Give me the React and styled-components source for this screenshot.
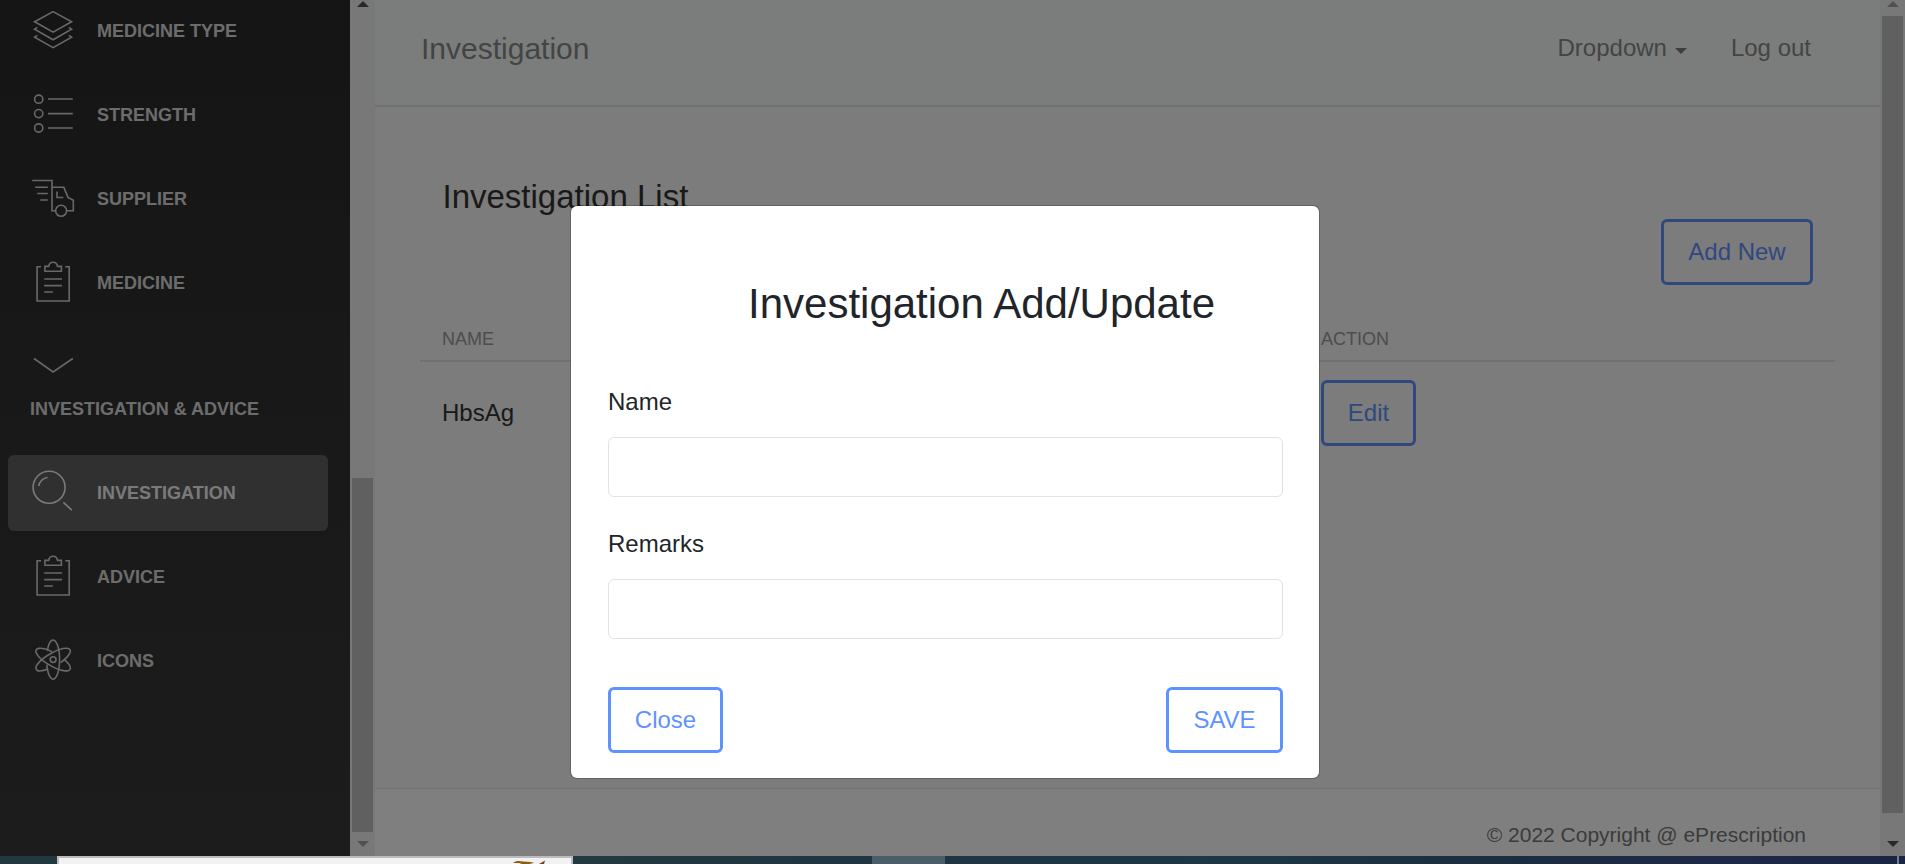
import React from "react";
import styled, { createGlobalStyle, css } from "styled-components";

const GlobalStyle = createGlobalStyle`
  * { box-sizing: border-box; }
  html, body { margin: 0; padding: 0; overflow: hidden; }
  body { font-family: "Liberation Sans", Arial, sans-serif; font-size: 24px; color: #212529; }
`;

const Desktop = styled.div`
  display: flex;
  flex-direction: column;
  width: 1905px;
  height: 864px;
  overflow: hidden;
`;

const Viewport = styled.div`
  position: relative;
  display: grid;
  grid-template-columns: 350px 25px 1505px 25px;
  height: 856px;
`;

/* Sidebar */
const Sidebar = styled.nav`
  height: 856px;
  overflow: hidden;
  padding: 0 22px 0 8px;
  background: linear-gradient(#2a2a2a, #393939);
`;

const NavList = styled.ul`
  list-style: none;
  margin: -7px 0 0;
  padding: 0;
  display: flex;
  flex-direction: column;
  gap: 8px;
`;

const NavItem = styled.li`
  display: flex;
  align-items: center;
  height: 76px;
  padding-left: 21px;
  border-radius: 6px;
  color: ${(p) => (p.$active ? "#fff" : "#dcdcdc")};
  background: ${(p) => (p.$active ? "#606060" : "transparent")};
  ${(p) =>
    p.$group &&
    css`
      flex-direction: column;
      align-items: flex-start;
      height: 118px;
      padding-top: 24px;
    `}
`;

const NavLabel = styled.span`
  margin: ${(p) => (p.$group ? "17px 0 0 1px" : "0 0 0 20px")};
  font-size: 18px;
  line-height: 30px;
  font-weight: 700;
  white-space: nowrap;
  color: ${(p) => (p.$active ? "#f5f5f5" : "#d9d9d9")};
`;

const Glyph = styled.svg`
  flex: none;
  width: 48px;
  height: ${(p) => (p.$short ? 24 : 48)}px;
  fill: none;
  stroke: currentColor;
  stroke-width: 1.6;
  stroke-linejoin: miter;
  opacity: 0.94;
`;

/* Scroll bars */
const ScrollTrack = styled.div`
  display: flex;
  flex-direction: column;
  align-items: center;
  height: 856px;
  padding: 1px 1px 9px;
  background: #f1f1f1;
`;

const ScrollArrow = styled.svg`
  flex: none;
  width: 12px;
  height: 6px;
  fill: ${(p) => (p.$dark ? "#505050" : "#a3a3a3")};
`;

const ScrollThumb = styled.div`
  width: 21px;
  height: ${(p) => p.$height}px;
  margin-top: ${(p) => p.$offset}px;
  margin-bottom: auto;
  background: #c1c1c1;
`;

/* Main panel */
const Main = styled.main`
  display: flex;
  flex-direction: column;
  background: #f8f8f8;
`;

const Header = styled.header`
  display: flex;
  align-items: center;
  justify-content: space-between;
  height: 107px;
  padding: 0 69px 7px 46px;
  border-bottom: 2px solid #e0e2e1;
  background: #f7fbf8;
  color: #888;
`;

const PageName = styled.div`
  font-size: 30px;
`;

const HeaderLinks = styled.div`
  display: flex;
  align-items: center;
  gap: 44px;
  margin-top: -2px;
`;

const HeaderLink = styled.a`
  display: flex;
  align-items: center;
`;

const Caret = styled.span`
  margin: 6px 0 0 8px;
  border: 6px solid transparent;
  border-top-color: #7c7c7c;
  border-bottom: 0;
`;

const Content = styled.section`
  flex: 1;
  padding: 71px 45px 0;
`;

const ListTitle = styled.h4`
  margin: 0 0 0 22.5px;
  font-size: 33px;
  font-weight: 400;
  line-height: 38px;
  color: #333;
`;

const Actions = styled.div`
  display: flex;
  justify-content: flex-end;
  margin-top: 3px;
  padding-right: 22px;
`;

const OutlineButton = styled.button`
  width: ${(p) => p.$width}px;
  height: 66px;
  padding: 0 0 1px;
  border: 3px solid #5e92ff;
  border-radius: 6px;
  background: transparent;
  color: #5e92ff;
  font: 24px "Liberation Sans", Arial, sans-serif;
`;

const TableHead = styled.div`
  display: grid;
  grid-template-columns: 879px 1fr;
  height: 43px;
  margin-top: 34px;
  padding: 9px 0 0 22px;
  border-bottom: 2px solid #e2e2e2;
  font-size: 18px;
  line-height: 22px;
  color: #9a9a9a;
`;

const TableRow = styled.div`
  display: grid;
  grid-template-columns: 879px 1fr;
  align-items: center;
  height: 102px;
  padding-left: 22px;
  color: #333;
`;

const Footer = styled.footer`
  display: flex;
  justify-content: flex-end;
  height: 68px;
  padding: 34px 74px 0 0;
  border-top: 1px solid #e7e7e7;
  background: #fff;
  font-size: 21px;
  line-height: 24px;
  color: #777;
`;

/* Dialog */
const Backdrop = styled.div`
  position: absolute;
  inset: 0;
  display: flex;
  justify-content: center;
  align-items: flex-start;
  padding: 205px 15px 0 0;
  background: rgba(0, 0, 0, 0.5);
`;

const Dialog = styled.div`
  width: 750px;
  height: 574px;
  padding: 73px 36px 0 37px;
  border: 1px solid rgba(0, 0, 0, 0.2);
  border-radius: 7px;
  background: #fff;
  background-clip: padding-box;
`;

const DialogTitle = styled.h3`
  margin: 0 0 55px 140px;
  font-size: 42px;
  font-weight: 400;
  line-height: 50px;
`;

const Field = styled.label`
  display: flex;
  flex-direction: column;
  gap: 17px;
  margin-bottom: 29px;
  line-height: 36px;
`;

const Input = styled.input`
  height: 60px;
  width: 100%;
  padding: 8px 18px;
  border: 1px solid #e3e3e3;
  border-radius: 6px;
  background: #fff;
  font: inherit;
`;

const DialogFooter = styled.div`
  display: flex;
  justify-content: space-between;
  padding-top: 19px;
`;

/* Desktop strip below the window */
const Taskbar = styled.div`
  display: flex;
  height: 8px;
  padding-left: 57px;
  background: linear-gradient(90deg, #22383f 0, #22393f 600px, #203442 900px, #1d3745 1200px, #1c2d40 1500px, #1d2946 1700px, #1a2544);
`;

const SearchBox = styled.div`
  display: flex;
  justify-content: flex-end;
  width: 516px;
  padding-right: 10px;
  border: 2px solid #bcbcbc;
  border-bottom: 0;
  background: #f2f2f2;
`;

const Doodle = styled.svg`
  width: 48px;
  height: 6px;
`;

const ActiveTask = styled.div`
  width: 73px;
  margin-left: 299px;
  background: #4b5e68;
`;

const DesktopEdge = styled.div`
  width: 2px;
  margin: 0 6px 0 auto;
  background: #747c8f;
`;

const clipboard = (
  <>
    <path d="M12 7.8H8.1V42H40.2V7.8H36.2" />
    <path d="M15.9 12.300V7.400H19.700C20.400 1.900 27.800 1.900 28.500 7.400H32.400V12.300Z" />
    <path d="M15.200 20H33M15.200 26.600H33M15.200 33H23.800" />
  </>
);

const orbit = "M-5.770 -9A6.500 19.600 0 1 1 -6.280 5";

const glyphs = {
  layers: (
    <>
      <path d="M24.1 4.600L42.600 14.700 24.1 25.200 5.600 14.700Z" />
      <path d="M8.300 20.300L5.600 22.200 24.1 32.800 42.600 22.200 39.900 20.300M8.300 28.300L5.600 30.200 24.1 40.700 42.600 30.200 39.900 28.300" />
    </>
  ),
  list: (
    <>
      <circle cx="9.7" cy="8.2" r="4.1" />
      <circle cx="9.7" cy="22.6" r="4.1" />
      <circle cx="9.7" cy="37" r="4.1" />
      <path d="M19 8H43.8M19 22.600H43.8M19 37H43.8" />
    </>
  ),
  truck: (
    <>
      <path d="M3.2 5.500H23V35.700H26.500M37.700 35.700H44.300V25.200L39 22.400 34.800 12.200H23" />
      <circle cx="32.1" cy="35.7" r="5.500" />
      <path d="M6.2 12.200H18.800M8.200 18.500H18.800M11.200 25H18.800M28 16.500V22.500H34.300" />
    </>
  ),
  clipboard,
  chevron: <path d="M5 5.500L24.100 19 43.800 5.500" />,
  search: (
    <>
      <circle cx="20.1" cy="18.3" r="16" />
      <path d="M9.800 17C10.400 12.600 14 9 18.600 8.500M34.400 33.300L42.800 41.200" />
    </>
  ),
  atom: (
    <g transform="translate(24.1 22.6)">
      <path d={orbit} />
      <path d={orbit} transform="rotate(120)" />
      <path d={orbit} transform="rotate(240)" />
      <circle r="2.900" />
    </g>
  ),
};

const navItems = [
  { icon: "layers", label: "MEDICINE TYPE" },
  { icon: "list", label: "STRENGTH" },
  { icon: "truck", label: "SUPPLIER" },
  { icon: "clipboard", label: "MEDICINE" },
  { icon: "chevron", label: "INVESTIGATION & ADVICE", group: true },
  { icon: "search", label: "INVESTIGATION", active: true },
  { icon: "clipboard", label: "ADVICE" },
  { icon: "atom", label: "ICONS" },
];

function ScrollBar({ offset, height, upDark, downDark }) {
  return (
    <ScrollTrack>
      <ScrollArrow viewBox="0 0 12 6" $dark={upDark}>
        <path d="M0 6L6 0 12 6Z" />
      </ScrollArrow>
      <ScrollThumb $offset={offset} $height={height} />
      <ScrollArrow viewBox="0 0 12 6" $dark={downDark}>
        <path d="M0 0H12L6 6Z" />
      </ScrollArrow>
    </ScrollTrack>
  );
}

export default function App() {
  return (
    <Desktop>
      <GlobalStyle />
      <Viewport>
        <Sidebar>
          <NavList>
            {navItems.map(({ icon, label, active, group }) => (
              <NavItem key={label} $active={active} $group={group}>
                <Glyph viewBox={group ? "0 0 48 24" : "0 0 48 48"} $short={group}>
                  {glyphs[icon]}
                </Glyph>
                <NavLabel $group={group} $active={active}>
                  {label}
                </NavLabel>
              </NavItem>
            ))}
          </NavList>
        </Sidebar>
        <ScrollBar offset={471} height={354} upDark />
        <Main>
          <Header>
            <PageName>Investigation</PageName>
            <HeaderLinks>
              <HeaderLink>
                Dropdown
                <Caret />
              </HeaderLink>
              <HeaderLink>Log out</HeaderLink>
            </HeaderLinks>
          </Header>
          <Content>
            <ListTitle>Investigation List</ListTitle>
            <Actions>
              <OutlineButton $width={152}>Add New</OutlineButton>
            </Actions>
            <TableHead>
              <span>NAME</span>
              <span>ACTION</span>
            </TableHead>
            <TableRow>
              <span>HbsAg</span>
              <OutlineButton $width={95}>Edit</OutlineButton>
            </TableRow>
          </Content>
          <Footer>© 2022 Copyright @ ePrescription</Footer>
        </Main>
        <ScrollBar offset={9} height={797} downDark />
        <Backdrop>
          <Dialog>
            <DialogTitle>Investigation Add/Update</DialogTitle>
            <Field>
              Name
              <Input />
            </Field>
            <Field>
              Remarks
              <Input />
            </Field>
            <DialogFooter>
              <OutlineButton $width={115}>Close</OutlineButton>
              <OutlineButton $width={117}>SAVE</OutlineButton>
            </DialogFooter>
          </Dialog>
        </Backdrop>
      </Viewport>
      <Taskbar>
        <SearchBox>
          <Doodle viewBox="0 0 48 6">
            <path d="M0 5C2 2.500 7 2.500 10 3.500L18 4 21 5 16 6H9L6 5Z" fill="#8a5c10" />
            <path d="M26 6L32 2.500 31 6Z" fill="#6b4a14" />
          </Doodle>
        </SearchBox>
        <ActiveTask />
        <DesktopEdge />
      </Taskbar>
    </Desktop>
  );
}
